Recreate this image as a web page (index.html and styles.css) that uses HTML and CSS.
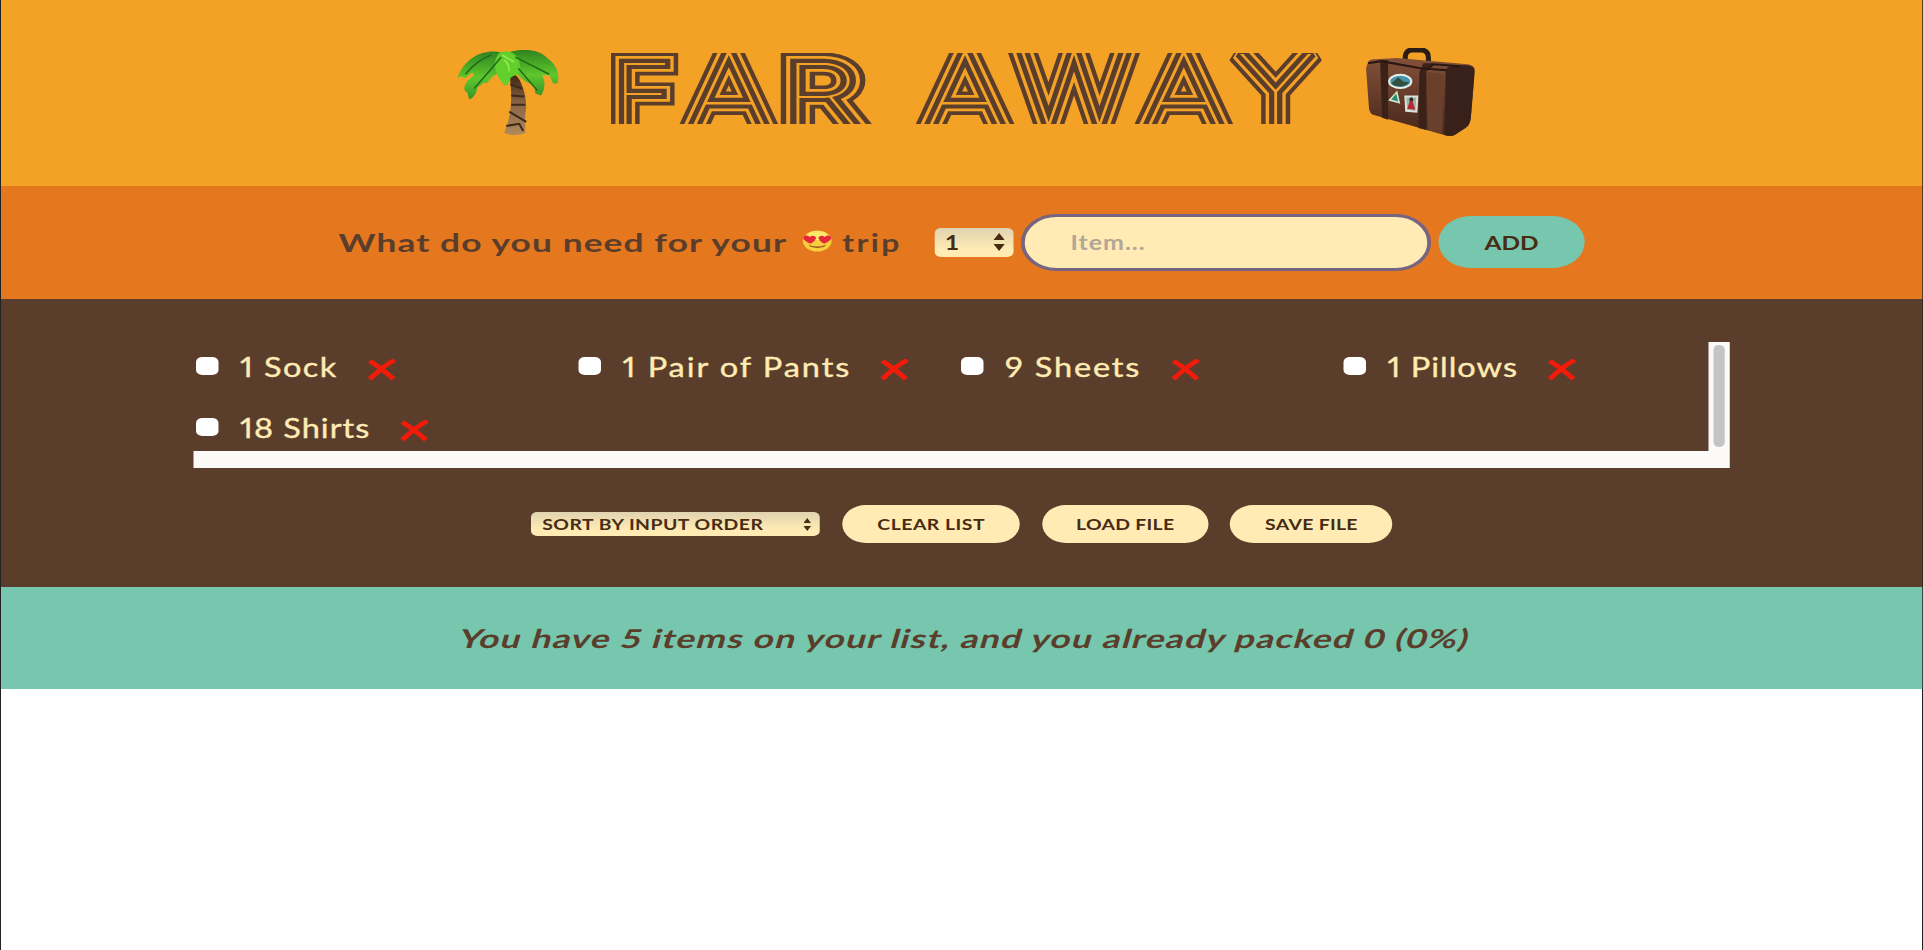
FILE: index.html
```html
<!DOCTYPE html>
<html lang="en">
<head>
<meta charset="utf-8">
<title>Far Away</title>
<link rel="stylesheet" href="styles.css">
</head>
<body>
<div class="window">
<div class="app">
  <header class="banner">
    <svg class="palm" viewBox="0 0 102 84" preserveAspectRatio="none">
      <defs>
        <linearGradient id="leaf" x1="0" y1="0" x2="0" y2="1"><stop offset="0" stop-color="#2f8420"/><stop offset=".55" stop-color="#5fc72c"/><stop offset="1" stop-color="#35942a"/></linearGradient>
        <linearGradient id="bark" x1="0" y1="0" x2="0" y2="1"><stop offset="0" stop-color="#35210f"/><stop offset=".5" stop-color="#8a6547"/><stop offset="1" stop-color="#b0895b"/></linearGradient>
      </defs>
      <path d="M53 22Q61 25 64 33Q71 49 68 64L68 82Q58 86 47 82Q54 66 54 48Q54 34 52 24Z" fill="url(#bark)"/>
      <path d="M53 34L65 38M54 45L67 46M54 54L68 54M52 61L69 71M49 75L62 73L66 80" stroke="#3e2818" stroke-width="2" fill="none"/>
      <path d="M46 3C30-2 8 5 0 28L4 26L8 28L15 22L17 25C8 31 4 39 10 42L12 49Q19 46 20 37L27 32L29 33L36 26L45 20Z" fill="url(#leaf)"/>
      <path d="M50 3C62-2 82-2 91 9C100 15 104 28 100 33L96 33L92 25L85 25Q90 35 84 45L78 43L77 35L68 31L63 27L56 20Z" fill="url(#leaf)"/>
      <path d="M42 3Q52-2 61 8Q66 22 58 25L54 27L50 35L46 34L42 28Q33 14 42 3Z" fill="#62cf2c"/>
      <path d="M34 5Q20 10 8 24M44 7Q34 19 17 38M58 7Q78 17 92 24M61 18L80 40" stroke="#1f6a1c" stroke-width="1.5" fill="none"/>
      <path d="M47 10Q52 13 52 21M45 5L57 12" stroke="#9af04e" stroke-width="1.5" fill="none"/>
    </svg>
    <svg class="logo" viewBox="0 0 580 71" role="img" aria-label="FAR AWAY">
      <defs>
        <clipPath id="cap"><rect x="-5" y="0" width="600" height="71"/></clipPath>
      </defs>
      <g clip-path="url(#cap)">
        <use href="#word" class="ring outer"/>
        <use href="#word" class="ring gap"/>
        <use href="#word" class="ring inner"/>
        <g class="ring core"><text id="word" y="71"><tspan x="2">F</tspan><tspan class="wide-a" x="61.5" y="77">A</tspan><tspan class="wide-r" x="138" y="71" textLength="62" lengthAdjust="spacingAndGlyphs">R</tspan> <tspan class="wide-a" x="250.5" y="77">A</tspan><tspan class="tall" x="326.5" y="71">W</tspan><tspan class="wide-a" x="425.5" y="77">A</tspan><tspan class="tall-y" x="501" y="73">Y</tspan></text></g>
      </g>
    </svg>
    <svg class="case" viewBox="0 0 108 87" preserveAspectRatio="none">
      <defs><linearGradient id="hide" x1="0" y1="0" x2="0" y2="1"><stop offset="0" stop-color="#835039"/><stop offset="1" stop-color="#45261a"/></linearGradient></defs>
      <path d="M39 15V8Q40 2 46 2H56Q62 3 62 10V15" fill="none" stroke="#2a1c15" stroke-width="5"/>
      <path d="M2 14Q3 11 8 11L31 10L101 16Q108 17 108 22L104 70Q103 77 99 79L88 86Q84 88 78 86L7 66Q4 65 3 60L0 20Z" fill="url(#hide)"/>
      <path d="M79 23Q80 18 86 17L101 17Q108 18 108 23L104 70Q103 76 98 79L88 86Q84 88 78 86Z" fill="#38211a"/>
      <path d="M14 12L22 12L22 71L16 69ZM57 15L67 15L60 22L60 81L52 79L53 24Z" fill="#3a2219"/>
      <path d="M2 15L15 13L54 20L80 22M60 22L67 16L94 18" fill="none" stroke="#2a1710" stroke-width="2"/>
      <path d="M61 24L77 26L76 85L61 81Z" fill="#68402c"/>
      <ellipse cx="34" cy="33" rx="12" ry="7.500" fill="#e5eee9"/><ellipse cx="34" cy="33" rx="10" ry="5.500" fill="#4794ae"/>
      <path d="M25 35L32 29L37 33L43 34Q37 40 28 37Z" fill="#31503e"/>
      <path d="M31 42L34 55L22 52Z" fill="#dce6cf"/><path d="M30 45L32 53L25 51Z" fill="#278f72"/>
      <path d="M38 47H52L51 64L39 63Z" fill="#dce0da"/><path d="M40 49H50L49 62L41 61Z" fill="#94b6ad"/><path d="M45 48L47 55L49 61L41 60L43 54Z" fill="#bd2331"/><circle cx="45" cy="51" r="2" fill="#3d2928"/>
    </svg>
  </header>

  <form class="add-form">
    <h3 class="question"><span class="ask"><span class="wide">What do you need for your</span></span>
      <svg class="face" viewBox="0 0 24 24" preserveAspectRatio="none"><circle cx="12" cy="12" r="11.500" fill="#f9ce3d"/><ellipse cx="12" cy="6" rx="8" ry="5" fill="#ffe76a"/><path d="M6.500 15Q0 11 1 7.500Q3 4.500 6 7.500Q9 5 11 8Q11 12 6.500 15Z" fill="#e5263b"/><path d="M17.500 15Q24 11 23 7.500Q21 4.500 18 7.500Q15 5 13 8Q13 12 17.500 15Z" fill="#e5263b"/><path d="M5 16Q12 20 19 16Q18 19 12 19.500Q6 19 5 16Z" fill="#98501e"/></svg>
      <span class="trip">trip</span></h3>
    <div class="select qty"><span>1</span><svg viewBox="0 0 10 18" preserveAspectRatio="none"><path d="M5 0L10 7H0ZM5 18L0 11H10Z"/></svg></div>
    <div class="field"><span>Item...</span></div>
    <button class="btn add" type="button"><span>ADD</span></button>
  </form>

  <main class="list">
    <div class="scroll">
      <ul class="items">
        <li><i class="box"></i><span class="sock">1 Sock</span><svg class="x" viewBox="0 0 24 22" preserveAspectRatio="none"><path d="M2 2Q10 8 21 20M22 1Q14 6 2 20"/></svg></li>
        <li><i class="box"></i><span class="pants">1 Pair of Pants</span><svg class="x" viewBox="0 0 24 22" preserveAspectRatio="none"><path d="M2 2Q10 8 21 20M22 1Q14 6 2 20"/></svg></li>
        <li><i class="box"></i><span class="sheets">9 Sheets</span><svg class="x" viewBox="0 0 24 22" preserveAspectRatio="none"><path d="M2 2Q10 8 21 20M22 1Q14 6 2 20"/></svg></li>
        <li><i class="box"></i><span class="pillows">1 Pillows</span><svg class="x" viewBox="0 0 24 22" preserveAspectRatio="none"><path d="M2 2Q10 8 21 20M22 1Q14 6 2 20"/></svg></li>
        <li><i class="box"></i><span class="shirts">18 Shirts</span><svg class="x" viewBox="0 0 24 22" preserveAspectRatio="none"><path d="M2 2Q10 8 21 20M22 1Q14 6 2 20"/></svg></li>
      </ul>
      <div class="vbar"><div class="thumb"></div></div>
      <div class="hbar"></div>
    </div>
    <div class="actions">
      <div class="select sort"><span>SORT BY INPUT ORDER</span><svg viewBox="0 0 10 18" preserveAspectRatio="none"><path d="M5 0L10 7H0ZM5 18L0 11H10Z"/></svg></div>
      <button class="btn clear" type="button"><span>CLEAR LIST</span></button>
      <button class="btn load" type="button"><span>LOAD FILE</span></button>
      <button class="btn save" type="button"><span>SAVE FILE</span></button>
    </div>
  </main>

  <footer class="stats"><em>You have 5 items on your list, and you already packed 0 (0%)</em></footer>
</div>
</div>
</body>
</html>
```

FILE: styles.css
```css
* { box-sizing: border-box; margin: 0; padding: 0; }
body { background: #fff; overflow: hidden; font-family: Lato, "Open Sans", sans-serif; color: #5a3e2b; }
.window { width: 1923px; height: 950px; overflow: hidden; box-shadow: inset 1px 0 #222, inset -1px 0 #222; }
/* The whole interface is drawn 1.25 times wider than tall. */
.app { width: 1536.8px; margin-left: 1px; transform: scaleX(1.25); transform-origin: 0 0; white-space: nowrap; }

.banner { height: 186px; background: #f4a226; display: flex; align-items: flex-start; padding: 48px 0 0 364.8px; }
.palm { width: 81.6px; height: 85px; margin-top: 2px; }
.logo { width: 580px; height: 71px; margin: 5px 0 0 41px; overflow: visible; }
.case { width: 87px; height: 88px; margin-left: 25px; }
.ring { font-family: Inter, Lato, sans-serif; font-weight: 100; font-size: 84px; stroke-linejoin: miter; stroke-miterlimit: 2; }
.tall { font-size: 97px; }
.wide-a { font-size: 106px; }
.tall-y { font-size: 99px; }
.outer { fill: #5a3e2b; stroke: #5a3e2b; stroke-width: 21px; }
.gap { fill: #f4a226; stroke: #f4a226; stroke-width: 13.8px; }
.inner { fill: #5a3e2b; stroke: #5a3e2b; stroke-width: 8.4px; }
.core { fill: #f4a226; }

.add-form { height: 112.500px; background: #e5771f; display: flex; align-items: center; padding-left: 269.5px; }
.question { display: flex; align-items: center; width: 477.500px; font-size: 25.5px; font-weight: 700; }
.ask { width: 371px; }
.wide { display: inline-block; letter-spacing: .8px; transform: scaleX(1.107); transform-origin: 0 50%; }
.trip { letter-spacing: 1.9px; }
.face { width: 24px; height: 22px; margin: 0 8.500px 2px 0; }
.select { display: flex; align-items: center; justify-content: space-between; background: linear-gradient(#e0d3b0, #ffebb3 75%); border-radius: 5px; color: #472c13; font-weight: 700; }
.select svg { fill: #472c13; }
.qty { width: 63px; height: 29px; padding: 0 7px 0 8px; font-size: 20px; }
.qty svg { width: 9px; height: 18px; }
.field { width: 328px; height: 57px; margin-left: 6px; border: 3px solid #776480; border-radius: 29px; background: #ffebb3; display: flex; align-items: center; padding-left: 36.500px; font-size: 20px; font-weight: 700; letter-spacing: .8px; color: #b2a697; }
.btn { border: 0; background: #ffebb3; color: #472c13; font: 700 15.5px Lato, sans-serif; border-radius: 30px; display: flex; align-items: center; justify-content: center; }
.add { width: 117px; height: 52px; margin-left: 6px; background: #76c7ad; font-size: 19.5px; }

.list { height: 288px; background: #5a3e2b; padding: 43.500px 0 0 154.4px; }
.scroll { width: 1229px; height: 126px; display: grid; grid-template-columns: 1fr 17.500px; grid-template-rows: 109px 17px; }
.items { list-style: none; display: grid; grid-template-columns: repeat(4, 306px); grid-auto-rows: 61.400px; overflow: hidden; color: #ffebb3; font-size: 26px; width: 1211px; font-feature-settings: "pnum"; -webkit-text-stroke: .35px #ffebb3; }
.items li { display: flex; align-items: flex-start; padding: 7.500px 0 0 1.600px; line-height: 34px; }
.items span { flex: none; }
.box { flex: none; width: 18.500px; height: 18px; margin: 7px 16.800px 0 0; border-radius: 5px; background: #fff; }
.x { flex: none; width: 24px; height: 22px; margin: 9px 0 0 -1.5px; fill: none; stroke: #f21b0a; stroke-width: 4.3px; }
.sock { width: 103.500px; letter-spacing: 1.1px; }
.pants { width: 207.500px; letter-spacing: 1.55px; }
.sheets { width: 134.500px; letter-spacing: 1.45px; }
.pillows { width: 129.500px; letter-spacing: .8px; }
.shirts { width: 129px; letter-spacing: .8px; }
.vbar { background: #fbfaf8; display: flex; justify-content: center; padding-top: 3px; }
.thumb { width: 9px; height: 102px; border-radius: 5px; background: #c3c5c5; }
.hbar { grid-column: 1 / 3; background: #fbfaf8; }
.actions { display: flex; align-items: center; margin: 36.500px 0 0 269.600px; height: 39px; }
.sort { width: 231px; height: 24px; padding: 0 7px 0 9px; font-size: 15.5px; letter-spacing: .38px; }
.sort svg { width: 6px; height: 13px; }
.actions .btn { height: 38px; letter-spacing: .25px; }
.clear { width: 142.400px; margin-left: 18px; }
.clear span { letter-spacing: .4px; }
.load { width: 133px; margin-left: 17.500px; }
.save { width: 130px; margin-left: 17.500px; }

.stats { height: 102px; background: #76c7ad; display: flex; align-items: center; justify-content: center; font-size: 26px; font-weight: 700; }
.stats em { font-style: normal; letter-spacing: .8px; margin-left: 5px; transform: skewX(-13deg) scaleX(1.094); }
```
